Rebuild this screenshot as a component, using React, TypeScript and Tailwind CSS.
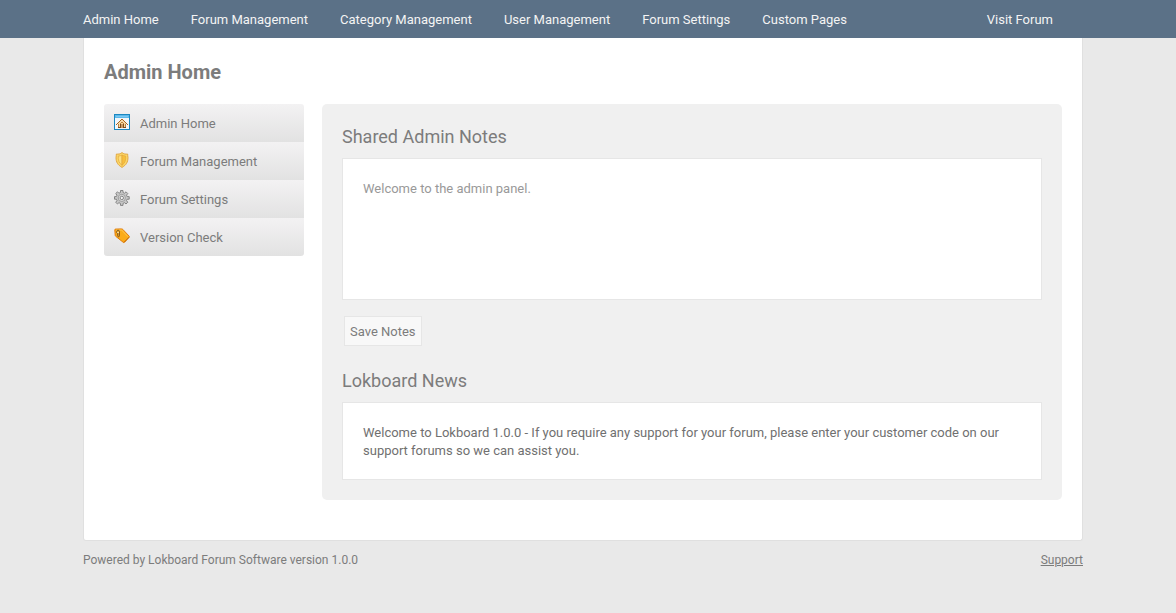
import { useState, type FormEvent, type ReactNode } from 'react';

const navLinks = [
  'Admin Home',
  'Forum Management',
  'Category Management',
  'User Management',
  'Forum Settings',
  'Custom Pages',
];

function HomeIcon() {
  return (
    <svg width="16" height="16" viewBox="0 0 16 16" shapeRendering="crispEdges" aria-hidden="true">
      <rect width="16" height="16" fill="#1b87c0" />
      <rect x="1" y="1" width="14" height="3" fill="#5db8ea" />
      <rect x="2" y="2" width="12" height="1" fill="#7cc9f2" />
      <rect x="1" y="4" width="14" height="11" fill="#f2f6f9" />
      <path d="M7 6h2v1h1v1h1v1h1v5H4V9h1V8h1V7h1z" fill="#f6d8a8" />
      <path
        d="M7 5h2v1H7zM6 6h1v1H6zM9 6h1v1H9zM5 7h1v1H5zM10 7h1v1h-1zM4 8h1v1H4zM11 8h1v1h-1zM3 9h1v1H3zM12 9h1v1h-1zM2 10h1v1H2zM13 10h1v1h-1z"
        fill="#a8641f"
      />
      <path d="M4 10h1v4H4zM11 10h1v4h-1zM7 8h2v1H7zM6 9h1v1H6zM9 9h1v1H9z" fill="#c08239" />
      <path d="M6 10h1v4H6zM9 10h1v4H9zM4 13h2v1H4zM10 13h2v1h-2z" fill="#7e4c1c" />
      <path d="M7 10h2v4H7z" fill="#c99a64" />
    </svg>
  );
}

function ShieldIcon() {
  return (
    <svg width="16" height="16" viewBox="0 0 16 16" aria-hidden="true">
      <path
        d="M8 .6C6.600 1.800 4.600 2.300 2.300 2.100c.3 1.200-.3 2-.3 3.400 0 4.600 1.800 7.600 6 9.900 4.200-2.300 6-5.300 6-9.900 0-1.400-.6-2.200-.3-3.400C11.400 2.300 9.400 1.800 8 .6z"
        fill="#fbd768"
        stroke="#dfa03a"
        strokeWidth=".9"
      />
      <path d="M8 3C6.900 3.700 5.500 4 4.300 4 3.900 8 5 11.200 8 13.300z" fill="#fcdf7e" stroke="#e2a63c" strokeWidth=".7" />
      <path d="M8 3c1.100.7 2.500 1 3.700 1 .4 4-.7 7.200-3.700 9.300z" fill="#f7bf3c" stroke="#e2a63c" strokeWidth=".7" />
    </svg>
  );
}

function GearIcon() {
  return (
    <svg width="16" height="16" viewBox="0 0 16 16" aria-hidden="true">
      <path
        d="M6.500.5h2.500v2l1.600.7L12 1.800l1.800 1.800-1.300 1.500.6 1.500h2.100v2.600h-2.100l-.6 1.500 1.300 1.500L12 14l-1.400-1.300-1.600.7v2H6.500v-2l-1.600-.7L3.500 14l-1.800-1.800L3 10.700l-.6-1.500H.5V6.600h1.900L3 5.100 1.700 3.600l1.800-1.800 1.400 1.400 1.600-.7z"
        fill="#c6c6c6"
        stroke="#858585"
      />
      <circle cx="7.800" cy="7.900" r="3.600" fill="#d8d8d8" stroke="#999" strokeWidth=".9" />
      <circle cx="7.800" cy="7.900" r="1.700" fill="#f2f2f2" stroke="#838383" />
    </svg>
  );
}

function TagIcon() {
  return (
    <svg width="16" height="16" viewBox="0 0 16 16" aria-hidden="true">
      <path
        d="M1.500 1.100 7.600.9c.5 0 .8.100 1.200.5l6.200 6.600c.5.500.5 1 0 1.500l-4.400 4.700c-.5.500-1 .5-1.500 0L1.700 8.300c-.4-.4-.5-.7-.5-1.200L.8 1.900c0-.5.200-.8.700-.8z"
        fill="#fbab18"
        stroke="#e27d0c"
      />
      <path d="M2 2.200 7.600 2l6.400 6.700" fill="none" stroke="#fdc84e" />
      <path d="m10 14.300 5-5.100" stroke="#b9640c" strokeWidth=".8" />
      <path d="M2.800 5V3.200c0-1.300 2.600-1.300 2.600 0v4.600c0 1.300-1.700 1.300-1.700 0V5" fill="none" stroke="#6d4d28" strokeWidth=".9" />
      <circle cx="4" cy="4.500" r=".8" fill="#fff0c4" />
    </svg>
  );
}

const sideLinks: { label: string; icon: ReactNode }[] = [
  { label: 'Admin Home', icon: <HomeIcon /> },
  { label: 'Forum Management', icon: <ShieldIcon /> },
  { label: 'Forum Settings', icon: <GearIcon /> },
  { label: 'Version Check', icon: <TagIcon /> },
];

function TopNav() {
  return (
    <nav className="bg-[#5b7187] pr-2.5 text-[#f4f4f4]">
      <div className="mx-auto flex h-[38px] max-w-[1000px] items-center justify-between pt-0.5 pr-[30px]">
        <ul className="flex gap-8">
          {navLinks.map((label) => (
            <li key={label}>
              <a href="#" className="whitespace-nowrap hover:underline">
                {label}
              </a>
            </li>
          ))}
        </ul>
        <a href="#" className="whitespace-nowrap hover:underline">
          Visit Forum
        </a>
      </div>
    </nav>
  );
}

function SideMenu() {
  return (
    <ul className="w-[200px] shrink-0 overflow-hidden rounded-[3px]">
      {sideLinks.map(({ label, icon }) => (
        <li key={label}>
          <a
            href="#"
            className="flex h-[38px] items-center gap-2.5 bg-linear-to-b from-[#f3f2f3] to-[#e2e2e2] px-2.5 pt-0.5 hover:to-[#d8d8d8]"
          >
            <span className="pb-1">{icon}</span>
            {label}
          </a>
        </li>
      ))}
    </ul>
  );
}

export default function App() {
  const [notes, setNotes] = useState('Welcome to the admin panel.');

  const saveNotes = (e: FormEvent) => {
    e.preventDefault();
  };

  return (
    <div className="min-h-screen bg-[#e9e9e9] font-[Roboto,sans-serif] text-[13px] leading-[18px] text-[#7c7c7c]">
      <TopNav />

      <div className="pr-2.5">
        <div className="mx-auto max-w-[1000px]">
          <main className="rounded-b-[3px] border border-t-0 border-[#e0e0e0] bg-white px-5 pt-5 pb-10">
            <h1 className="mb-[18px] text-xl leading-7 font-bold">Admin Home</h1>

            <div className="flex items-start gap-[18px]">
              <SideMenu />

              <div className="min-w-0 flex-1 rounded-[5px] bg-[#f0f0f0] p-5">
                <form onSubmit={saveNotes}>
                  <h2 className="mb-2 text-lg leading-[26px]">
                    <label htmlFor="notes">Shared Admin Notes</label>
                  </h2>
                  <textarea
                    id="notes"
                    value={notes}
                    onChange={(e) => setNotes(e.target.value)}
                    className="block h-[142px] w-full resize-none border border-[#e6e6e6] bg-white px-5 pt-[21px] pb-[19px] text-[#999] outline-none"
                  />
                  <button
                    type="submit"
                    className="mt-4 ml-0.5 block h-[30px] border border-[#e6e6e6] bg-[#f8f8f8] px-[5px] pt-0.5 hover:bg-white"
                  >
                    Save Notes
                  </button>
                </form>

                <h2 className="mt-[22px] mb-2 text-lg leading-[26px]">Lokboard News</h2>
                <div className="border border-[#e6e6e6] bg-white px-5 pt-[21px] pb-[19px] text-[#707070]">
                  Welcome to Lokboard 1.0.0 - If you require any support for your forum, please enter your
                  customer code on our support forums so we can assist you.
                </div>
              </div>
            </div>
          </main>

          <footer className="flex justify-between py-2.5 text-xs leading-[18px]">
            <p>Powered by Lokboard Forum Software version 1.0.0</p>
            <a href="#" className="underline">
              Support
            </a>
          </footer>
        </div>
      </div>
    </div>
  );
}
